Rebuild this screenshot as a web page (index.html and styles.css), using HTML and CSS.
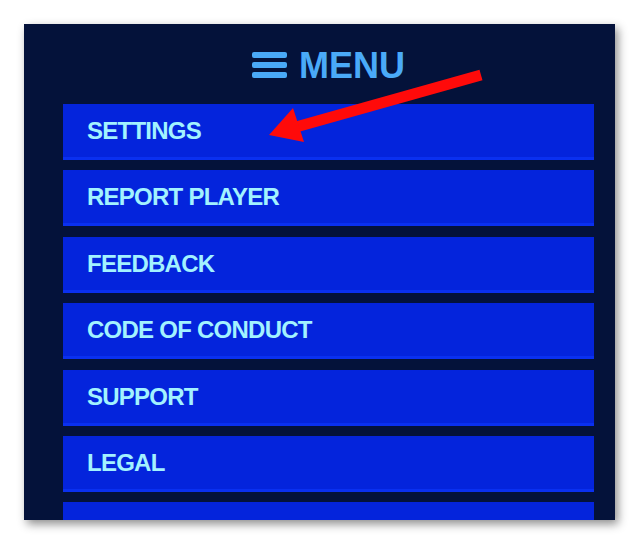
FILE: index.html
```html
<!DOCTYPE html>
<html>
<head>
<meta charset="utf-8">
<link rel="stylesheet" href="styles.css">
</head>
<body>
<div class="panel">
  <div class="header">
    <svg class="burger" width="35" height="27" viewBox="0 0 35 27">
      <rect x="0" y="0" width="35" height="6" rx="2" fill="#4aa9f7"/>
      <rect x="0" y="10" width="35" height="6" rx="2" fill="#4aa9f7"/>
      <rect x="0" y="20" width="35" height="6" rx="2" fill="#4aa9f7"/>
    </svg>
    <span class="title">MENU</span>
  </div>
  <div class="list">
    <div class="item">SETTINGS</div>
    <div class="item">REPORT PLAYER</div>
    <div class="item">FEEDBACK</div>
    <div class="item">CODE OF CONDUCT</div>
    <div class="item">SUPPORT</div>
    <div class="item">LEGAL</div>
    <div class="item"></div>
  </div>
</div>
<svg class="arrow" width="640" height="545" viewBox="0 0 640 545">
  <line x1="296" y1="127" x2="481" y2="75" stroke="#ff0a0a" stroke-width="11"/>
  <polygon points="269,135 293,108 304,142" fill="#ff0a0a"/>
</svg>
</body>
</html>
```

FILE: styles.css
```css
html, body {
  margin: 0;
  padding: 0;
  background: #ffffff;
}
body {
  width: 640px;
  height: 545px;
  overflow: hidden;
  position: relative;
  font-family: "Liberation Sans", Arial, sans-serif;
}
.panel {
  margin: 24px 0 0 24px;
  width: 591px;
  height: 496px;
  background: #04123a;
  box-shadow: 3px 4px 9px rgba(0, 0, 0, 0.45);
  overflow: hidden;
  box-sizing: border-box;
  padding: 0 21px 0 39px;
}
.header {
  height: 80px;
  display: flex;
  align-items: center;
  justify-content: center;
  gap: 12px;
  box-sizing: border-box;
}
.burger {
  display: block;
  margin-top: 2px;
}
.title {
  font-size: 36px;
  font-weight: bold;
  color: #4aaaf8;
  letter-spacing: 0;
  line-height: 1;
  margin-top: 4px;
}
.list {
  display: flex;
  flex-direction: column;
  gap: 10.4px;
}
.item {
  flex: none;
  height: 56px;
  background: #0424dc;
  border-bottom: 3px solid #0a30f0;
  box-sizing: border-box;
  display: flex;
  align-items: center;
  padding: 1px 0 0 24px;
  color: #a2f2ff;
  font-size: 24px;
  font-weight: bold;
  letter-spacing: -0.75px;
}
.arrow {
  position: absolute;
  left: 0;
  top: 0;
  pointer-events: none;
}
```
